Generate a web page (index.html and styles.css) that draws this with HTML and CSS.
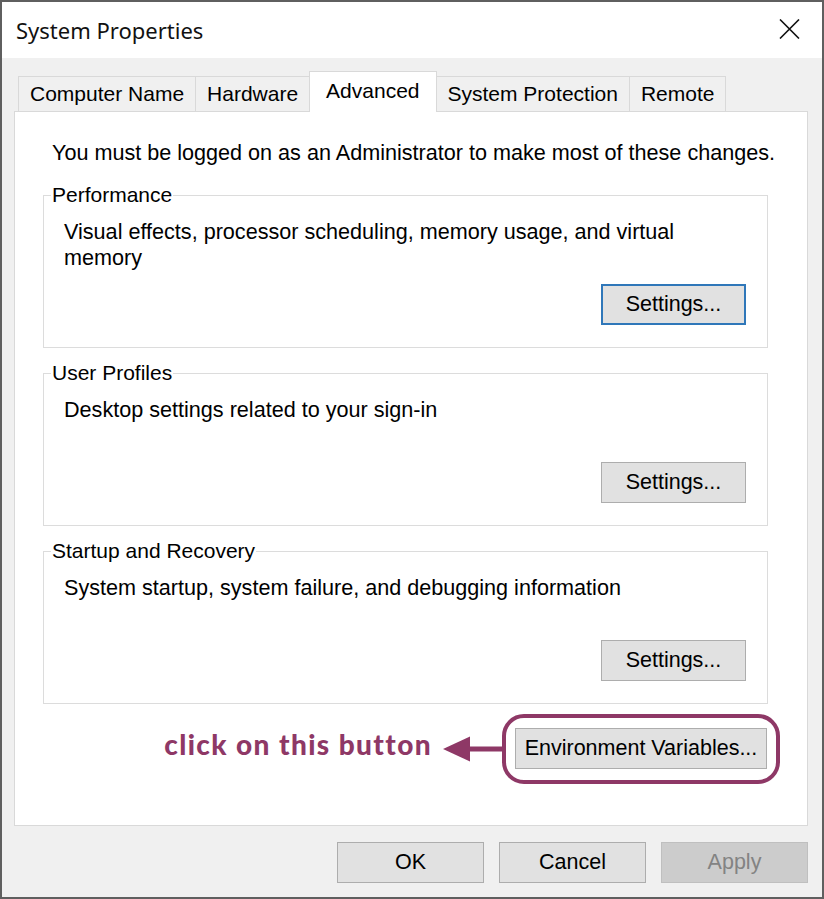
FILE: index.html
```html
<!DOCTYPE html>
<html lang="en">
<head>
    <meta charset="UTF-8">
    <title>System Properties</title>
    <link rel="stylesheet" href="styles.css">
</head>
<body>
    <div class="window">
        <div class="titlebar">
            <span class="title">System Properties</span>
            <svg class="close" width="21" height="20" viewBox="0 0 21 20">
                <path d="M1 0.5L20 19.5M20 0.5L1 19.5" stroke="#111" stroke-width="1.6" fill="none"/>
            </svg>
        </div>

        <div class="tabs">
            <div class="tab">Computer Name</div>
            <div class="tab">Hardware</div>
            <div class="tab active">Advanced</div>
            <div class="tab">System Protection</div>
            <div class="tab">Remote</div>
        </div>

        <div class="panel">
            <p class="notice">You must be logged on as an Administrator to make most of these changes.</p>

            <fieldset class="group">
                <legend>Performance</legend>
                <p class="group-text">Visual effects, processor scheduling, memory usage, and virtual memory</p>
                <div class="group-actions">
                    <button class="btn btn-settings focused">Settings...</button>
                </div>
            </fieldset>

            <fieldset class="group">
                <legend>User Profiles</legend>
                <p class="group-text">Desktop settings related to your sign-in</p>
                <div class="group-actions">
                    <button class="btn btn-settings">Settings...</button>
                </div>
            </fieldset>

            <fieldset class="group last">
                <legend>Startup and Recovery</legend>
                <p class="group-text">System startup, system failure, and debugging information</p>
                <div class="group-actions">
                    <button class="btn btn-settings">Settings...</button>
                </div>
            </fieldset>

            <div class="env-row">
                <span class="hint">click on this button</span>
                <svg class="hint-arrow" width="59" height="28" viewBox="0 0 59 28">
                    <polygon points="0,14 27,1.5 27,26.5" fill="#8e3866"/>
                    <rect x="25" y="11.5" width="34" height="5" fill="#8e3866"/>
                </svg>
                <div class="highlight">
                    <button class="btn btn-env">Environment Variables...</button>
                </div>
            </div>
        </div>

        <div class="footer">
            <button class="btn btn-dialog">OK</button>
            <button class="btn btn-dialog">Cancel</button>
            <button class="btn btn-dialog disabled">Apply</button>
        </div>
    </div>
</body>
</html>
```

FILE: styles.css
```css
body {
    margin: 0;
    font-family: 'Liberation Sans', Arial, sans-serif;
    font-size: 21px;
    color: #000;
    background-color: #5f5f5f;
}
.window {
    width: 824px;
    height: 899px;
    box-sizing: border-box;
    border: 2px solid #5f5f5f;
    background-color: #f0f0f0;
    display: flex;
    flex-direction: column;
}
.titlebar {
    height: 56px;
    flex-shrink: 0;
    background-color: #fff;
    display: flex;
    align-items: center;
    justify-content: space-between;
    padding: 0 22px 0 14px;
}
.title {
    font-family: 'Noto Sans', 'Open Sans', sans-serif;
    font-size: 22px;
    color: #111;
}
.close {
    margin-top: -3px;
}
.tabs {
    display: flex;
    align-items: flex-end;
    height: 40px;
    margin: 13px 0 0 16px;
    flex-shrink: 0;
}
.tab {
    height: 35px;
    box-sizing: border-box;
    padding: 0 11px;
    border: 1px solid #d9d9d9;
    border-bottom: none;
    margin-right: -1px;
    background-color: #f0f0f0;
    display: flex;
    align-items: center;
    white-space: nowrap;
}
.tab.active {
    height: 41px;
    padding: 0 16px 3px;
    background-color: #fff;
    position: relative;
    z-index: 1;
    margin-bottom: -1px;
}
.panel {
    flex: 1;
    min-height: 0;
    margin: 0 14px 0 12px;
    background-color: #fff;
    border: 1px solid #d9d9d9;
    padding: 28px 39px 0 28px;
}
.notice {
    margin: 0 0 17px 9px;
    font-size: 21.6px;
    line-height: 26px;
    white-space: nowrap;
}
.group {
    margin: 0 0 13px 0;
    padding: 12px 21px 22px 20px;
    border: 1px solid #dcdcdc;
}
.group.last {
    margin-bottom: 0;
}
.group legend {
    margin-left: -13px;
    padding: 0 1px;
    line-height: 24px;
}
.group-text {
    margin: 0 0 13px 0;
    min-height: 52px;
    font-size: 21.6px;
    line-height: 26px;
    padding-right: 40px;
}
.group-actions {
    display: flex;
    justify-content: flex-end;
}
.btn {
    font-family: inherit;
    font-size: 21.5px;
    color: #000;
    background-color: #e1e1e1;
    border: 1px solid #adadad;
    height: 41px;
    padding: 0 8px;
    margin: 0;
}
.btn-settings {
    width: 145px;
}
.btn.focused {
    border: 2px solid #2f77b9;
}
.env-row {
    display: flex;
    justify-content: flex-end;
    align-items: center;
    margin-top: 24px;
    padding-right: 1px;
}
.hint {
    font-family: Lato, 'DejaVu Sans', sans-serif;
    font-weight: 900;
    font-size: 28px;
    line-height: 28px;
    letter-spacing: 1.4px;
    color: #8e3866;
    margin: 0 11px 10px 0;
}
.hint-arrow {
    display: block;
}
.highlight {
    position: relative;
    margin-left: 13px;
}
.highlight::before {
    content: '';
    position: absolute;
    top: -14px;
    bottom: -15px;
    left: -13px;
    right: -13px;
    border: 4px solid #8e3866;
    border-radius: 22px;
}
.btn-env {
    display: block;
    width: 252px;
}
.footer {
    display: flex;
    justify-content: flex-end;
    gap: 15px;
    padding: 16px 14px 14px 0;
    flex-shrink: 0;
}
.btn-dialog {
    width: 147px;
}
.btn.disabled {
    background-color: #cccccc;
    border-color: #bfbfbf;
    color: #838383;
}
```
